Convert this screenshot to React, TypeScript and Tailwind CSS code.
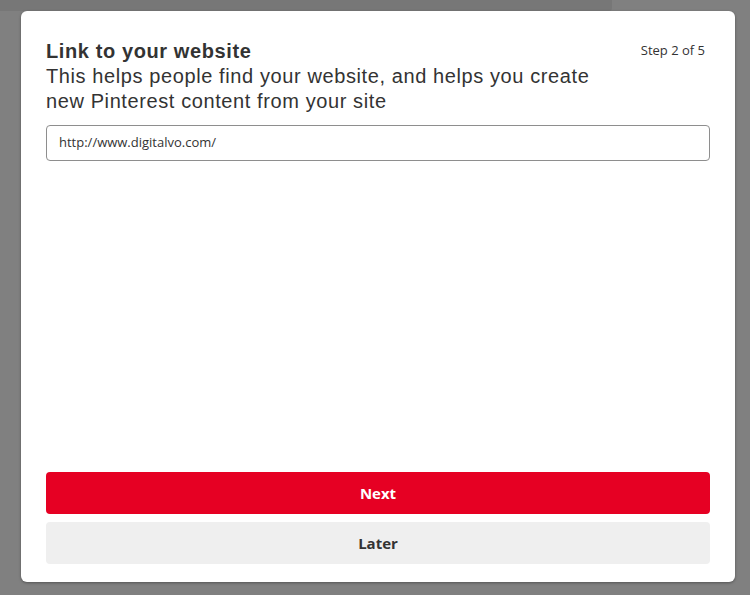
import React from "react";

export default function App() {
  return (
    <div className="relative h-[595px] w-[750px] overflow-hidden bg-[#808080] pl-[21px] pt-[11px]">
      <div className="absolute left-0 top-0 h-[11px] w-[612px] rounded-br-[3px] bg-[#777777]" />
      <div
        className="relative flex h-[571px] w-[714px] flex-col rounded-[6px] bg-white px-[25px] pb-[18px] pt-[28px] shadow-[0_1px_3px_rgba(0,0,0,0.35)]"
      >
        <div className="flex items-start justify-between">
          <div className="flex flex-col text-[#333333] tracking-[0.6px]" style={{ fontFamily: '"Liberation Sans", Arial, sans-serif' }}>
            <div className="text-[20px] font-bold leading-[25px]">Link to your website</div>
            <div className="text-[20px] leading-[25px]">
              This helps people find your website, and helps you create
              <br />
              new Pinterest content from your site
            </div>
          </div>
          <div
            className="pr-[5px] pt-[2px] text-[13px] leading-[18px] text-[#333333]"
            style={{ fontFamily: '"Open Sans", sans-serif' }}
          >
            Step 2 of 5
          </div>
        </div>
        <div className="mt-[11px] flex h-[36px] items-center rounded-[4px] border border-[#8e8e8e] px-[12px]">
          <span
            className="text-[13px] text-[#333333]"
            style={{ fontFamily: '"Open Sans", sans-serif' }}
          >
            http://www.digitalvo.com/
          </span>
        </div>
        <div className="flex-1" />
        <div className="flex flex-col gap-[8px]" style={{ fontFamily: '"Open Sans", sans-serif' }}>
          <button className="flex h-[42px] items-center justify-center rounded-[4px] bg-[#e60023] text-[15px] font-bold text-white">
            Next
          </button>
          <button className="flex h-[42px] items-center justify-center rounded-[4px] bg-[#efefef] text-[15px] font-bold text-[#333333]">
            Later
          </button>
        </div>
      </div>
    </div>
  );
}
